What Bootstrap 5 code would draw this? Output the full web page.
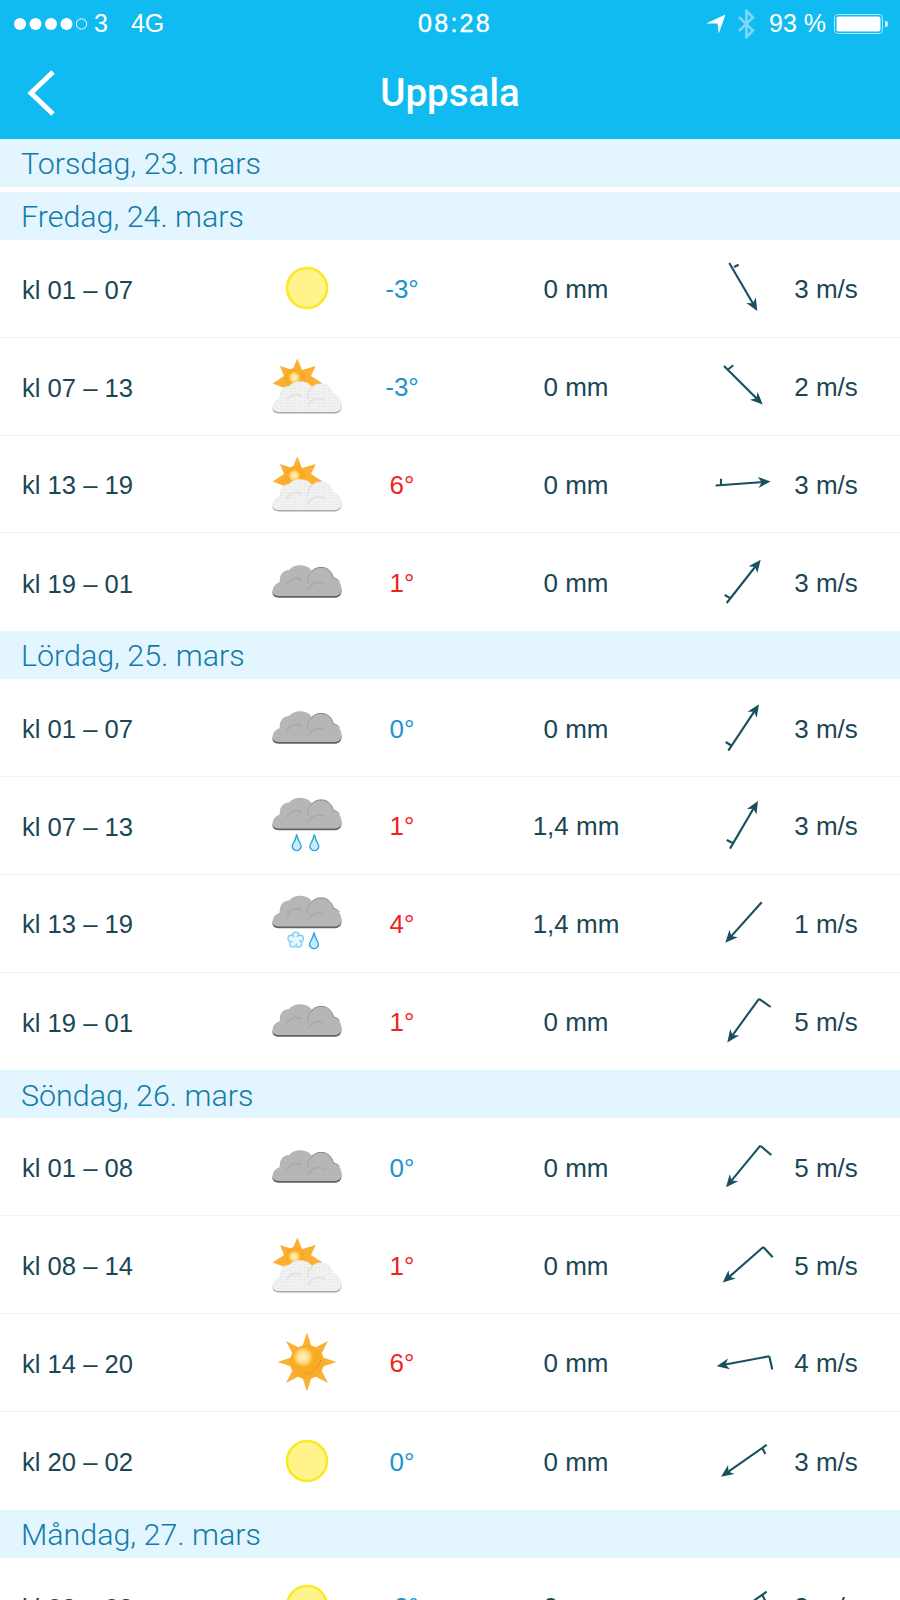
<!DOCTYPE html>
<html lang="sv">

<head>
    <meta charset="UTF-8">
    <meta name="viewport" content="width=device-width, initial-scale=1.0">
    <title>Uppsala</title>
    <link href="https://cdn.jsdelivr.net/npm/bootstrap@5.3.0/dist/css/bootstrap.min.css" rel="stylesheet">
    <style>
        body {
            font-family: "Liberation Sans", Arial, sans-serif;
            color: #1b4655;
            background: #fff;
            height: 100vh;
            overflow: hidden;
        }

        .sprites {
            position: absolute;
            width: 0;
            height: 0;
        }

        .top-bar {
            background: #0fbbf0;
            height: 139px;
            color: #fff;
        }

        .status-bar {
            height: 46px;
            padding: 2px 12px 0 14px;
            font-size: 25px;
        }

        .status-side {
            flex: 1 1 0;
        }

        .status-time {
            letter-spacing: 2.3px;
            margin-left: 8px;
            -webkit-text-stroke: 0.4px #fff;
        }

        .status-net {
            margin-left: 23px;
        }

        .status-bt {
            margin-left: 11px;
        }

        .status-pct {
            margin-left: 13px;
            margin-right: 8px;
        }

        .title-bar {
            height: 93px;
        }

        .title-side {
            width: 80px;
            padding-left: 25px;
        }

        .title-text {
            font-size: 38.5px;
            font-weight: 500;
            font-family: Roboto, "Liberation Sans", sans-serif;
            line-height: 1;
            padding-top: 2px;
        }

        .day-head {
            height: 48px;
            background: #e3f5fe;
            color: #127ba8;
            font-family: Roboto, "Liberation Sans", sans-serif;
            font-weight: 300;
            font-size: 30.4px;
            padding: 2px 0 0 21px;
        }

        .day-gap {
            margin-bottom: 5px;
        }

        .hour-row {
            height: 97.8px;
            font-size: 26px;
            padding-left: 22px;
            border-bottom: 1px solid #e7f4fa;
        }

        .hour-row.last-row {
            border-bottom: 0;
        }

        .c-time { width: 240px; padding-top: 3px; font-size: 25.6px; }
        .c-icon { width: 90px; height: 98px; }
        .c-temp { width: 100px; padding-top: 3px; text-align: center; }
        .c-rain { width: 248px; padding-top: 3px; text-align: center; }
        .c-dir { width: 90px; height: 98px; }
        .c-wind { width: 72px; padding-top: 3px; text-align: center; }

        .t-cold { color: #1e93cd; }
        .t-warm { color: #f0231f; }
    </style>
</head>

<body>
    <svg class="sprites" aria-hidden="true">
        <defs>
            <pattern id="dots" width="3" height="3" patternUnits="userSpaceOnUse">
                <rect x="0" y="0" width="1" height="1" fill="#e2e2e2" />
            </pattern>
            <radialGradient id="glow" cx="0.5" cy="0.5" r="0.5">
                <stop offset="0" stop-color="#fff4c4" />
                <stop offset="0.55" stop-color="#fde08a" />
                <stop offset="1" stop-color="#fab12f" />
            </radialGradient>
            <path id="cloud-shape" d="M17 75C11 75 10 71 10.7 69C11.5 64 15 62 18 61C17 54 21 49 27 49C30 45 36 43.5 41 44.5C45 45 48 47 50 50C53 47 57 46 61 46.5C66 47 70 51 71.5 57C76 57.5 79.5 63 79.5 68C79.5 73 76 75 73 75Z" />
        </defs>
        <symbol id="i-sun" viewBox="0 0 90 98">
            <circle cx="45" cy="49" r="20" fill="#fff48c" stroke="#fbe91f" stroke-width="2.5" />
        </symbol>
        <symbol id="i-star" viewBox="0 0 90 98">
            <polygon points="45,19.5 50.4,36.1 66,28 57.9,43.6 74.5,49 57.9,54.4 66,70 50.4,61.9 45,78.5 39.6,61.9 24,70 32.1,54.4 15.5,49 32.1,43.6 24,28 39.6,36.1" fill="#fbb034" />
            <circle cx="45" cy="49" r="17" fill="#f9ab26" />
            <circle cx="41" cy="44" r="10" fill="url(#glow)" />
            <path d="M43 60.5Q55 60 59 46" fill="none" stroke="#ee4a2a" stroke-width="1" stroke-dasharray="1 2.5" />
        </symbol>
        <symbol id="i-partly" viewBox="0 0 90 98">
            <polygon points="35.3,21.6 40,33 53.7,29 49,39 60.7,46.5 45,52 25,52 10.7,46.5 22,39 18,29 30.5,33" fill="#fbb034" />
            <circle cx="33" cy="41" r="10" fill="#f9ab26" />
            <circle cx="32.3" cy="40.6" r="6" fill="url(#glow)" />
            <use href="#cloud-shape" y="1.4" fill="#a4a9a9" />
            <use href="#cloud-shape" fill="#f1f1f1" />
            <use href="#cloud-shape" fill="url(#dots)" />
            <path d="M25 64C28 57 34 56 40 59M46 69C50 61 56 60 63 63M50 50C46 54 45 58 46 62" fill="none" stroke="#e3e3e3" stroke-width="2" />
        </symbol>
        <g id="grey-cloud">
            <use href="#cloud-shape" y="1.8" fill="#55656a" />
            <use href="#cloud-shape" fill="#b6b6b6" />
            <path d="M50 50C53 47 57 46 61 46.5C66 47 70 51 71.5 57C74 57.3 76 58.5 77.5 60.5" fill="none" stroke="#7f8b8c" stroke-width="1" />
            <path d="M25 64C28 57 34 56 40 59M46 69C50 61 56 60 63 63M50 50C46 54 45 58 46 62" fill="none" stroke="#a5abaa" stroke-width="1.6" />
        </g>
        <symbol id="i-cloud" viewBox="0 0 90 98">
            <use href="#grey-cloud" y="-12" />
        </symbol>
        <path id="drop" d="M0 0Q1 5 3.7 9.5A4.3 4.3 0 1 1 -3.7 9.5Q-1 5 0 0Z" fill="#cdecf9" stroke="#22a5e0" stroke-width="1.3" />
        <symbol id="i-rain" viewBox="0 0 90 98">
            <use href="#grey-cloud" y="-22.5" />
            <use href="#drop" x="34.7" y="58.5" />
            <use href="#drop" x="52.3" y="58.5" />
        </symbol>
        <symbol id="i-sleet" viewBox="0 0 90 98">
            <use href="#grey-cloud" y="-22.5" />
            <g transform="translate(33.7 66)" fill="#e6f6fd" stroke="#7ed0f2" stroke-width="1.4">
                <circle cx="0" cy="-4.6" r="3.3" />
                <circle cx="4.4" cy="-1.4" r="3.3" />
                <circle cx="2.7" cy="3.7" r="3.3" />
                <circle cx="-2.7" cy="3.7" r="3.3" />
                <circle cx="-4.4" cy="-1.4" r="3.3" />
                <circle cx="0" cy="0" r="3.6" stroke="none" />
            </g>
            <use href="#drop" x="52" y="58.5" />
        </symbol>
    </svg>

    <header class="top-bar">
        <div class="status-bar d-flex align-items-center">
            <div class="status-side d-flex align-items-center">
                <svg width="76" height="14" viewBox="0 0 76 14">
                    <circle cx="6" cy="7" r="6" fill="#fff" />
                    <circle cx="21.5" cy="7" r="6" fill="#fff" />
                    <circle cx="37" cy="7" r="6" fill="#fff" />
                    <circle cx="52.5" cy="7" r="6" fill="#fff" />
                    <circle cx="67.5" cy="7" r="5.2" fill="none" stroke="#fff" stroke-width="1" />
                </svg>
                <span class="ms-1">3</span>
                <span class="status-net">4G</span>
            </div>
            <div class="status-time">08:28</div>
            <div class="status-side d-flex align-items-center justify-content-end">
                <svg width="20" height="20" viewBox="0 0 20 20">
                    <path d="M0 9.5L19.5 0.5L12.8 19.5L11.5 9.5Z" fill="#fff" />
                </svg>
                <svg class="status-bt" width="19" height="30" viewBox="0 0 19 30" fill="none" stroke="#7fd6f6" stroke-width="2.6">
                    <path d="M2 8L16 21.5L9.5 28V2L16 8.5L2 22" />
                </svg>
                <span class="status-pct">93 %</span>
                <svg width="54" height="20" viewBox="0 0 54 20">
                    <rect x="0.5" y="0.5" width="48" height="19" rx="3.5" fill="none" stroke="#a8e6fa" />
                    <rect x="2.5" y="2.5" width="44" height="15" rx="2" fill="#fff" />
                    <path d="M51 7h1a2 2 0 0 1 2 2v2a2 2 0 0 1-2 2h-1Z" fill="#c9effb" />
                </svg>
            </div>
        </div>
        <nav class="title-bar d-flex align-items-center">
            <div class="title-side">
                <svg class="d-block" width="32" height="48" viewBox="0 0 32 48" fill="none" stroke="#fff" stroke-width="5">
                    <path d="M28 3L6 24L28 45" />
                </svg>
            </div>
            <div class="title-text flex-grow-1 text-center">Uppsala</div>
            <div class="title-side"></div>
        </nav>
    </header>

    <main id="forecast"></main>

    <script>
        // tail, head, tick start, tick end - measured per row, in the 90x98 box of the arrow
        const days = [
            { title: 'Torsdag, 23. mars', rows: [] },
            {
                title: 'Fredag, 24. mars', rows: [
                    ['kl 01 – 07', 'sun', '-3°', '0 mm', [29.3, 24, 57.3, 72, 34, 28, 38.7, 25.7], '3 m/s'],
                    ['kl 07 – 13', 'partly', '-3°', '0 mm', [24, 29, 62.7, 67.6, 28.3, 32.3, 33.3, 28.3], '2 m/s'],
                    ['kl 13 – 19', 'partly', '6°', '0 mm', [15.7, 50.5, 70.7, 46.5, 21, 49.8, 21, 43.8], '3 m/s'],
                    ['kl 19 – 01', 'cloud', '1°', '0 mm', [26.7, 70, 60.7, 26.8, 30.7, 65.4, 24.7, 62], '3 m/s']
                ]
            },
            {
                title: 'Lördag, 25. mars', rows: [
                    ['kl 01 – 07', 'cloud', '0°', '0 mm', [28.3, 71.7, 59, 25.3, 32, 67, 25.7, 63], '3 m/s'],
                    ['kl 07 – 13', 'rain', '1°', '1,4 mm', [30, 72.6, 58, 24.9, 33.3, 67.3, 26.7, 64], '3 m/s'],
                    ['kl 13 – 19', 'sleet', '4°', '1,4 mm', [61.7, 28.2, 25.3, 68.8], '1 m/s'],
                    ['kl 19 – 01', 'cloud', '1°', '0 mm', [59, 26.8, 27.3, 70.4, 59, 26.8, 70.7, 35], '5 m/s']
                ]
            },
            {
                title: 'Söndag, 26. mars', rows: [
                    ['kl 01 – 08', 'cloud', '0°', '0 mm', [60.3, 27.7, 26, 69.3, 60.3, 27.7, 71.3, 37], '5 m/s'],
                    ['kl 08 – 14', 'partly', '1°', '0 mm', [63.3, 31, 22.7, 66.6, 63.3, 31, 72.7, 41.3], '5 m/s'],
                    ['kl 14 – 20', 'star', '6°', '0 mm', [69.3, 43.2, 16.7, 53.2, 69.3, 43.2, 72.3, 56.5], '4 m/s'],
                    ['kl 20 – 02', 'sun', '0°', '0 mm', [66.7, 32.8, 21, 64.8, 62.3, 36, 65.3, 42], '3 m/s']
                ]
            },
            {
                title: 'Måndag, 27. mars', rows: [
                    ['kl 02 – 08', 'sun', '-2°', '0 mm', [66.7, 34.7, 21, 66.7, 62.3, 38, 65.3, 44], '3 m/s']
                ]
            }
        ];

        function windArrow(p) {
            const [x1, y1, x2, y2, tx1, ty1, tx2, ty2] = p;
            const len = Math.hypot(x2 - x1, y2 - y1);
            const ux = (x2 - x1) / len, uy = (y2 - y1) / len;
            const at = (back, side) => `${(x2 - ux * back - uy * side).toFixed(1)},${(y2 - uy * back + ux * side).toFixed(1)}`;
            const tick = tx1 === undefined ? '' : `<path d="M${tx1} ${ty1}L${tx2} ${ty2}" />`;
            return `<svg class="c-dir flex-shrink-0" viewBox="0 0 90 98" fill="none" stroke="#17505e" stroke-width="2.1">
                <path d="M${x1} ${y1}L${x2 - ux * 6} ${y2 - uy * 6}" />${tick}
                <polygon points="${x2},${y2} ${at(12.5, 5.5)} ${at(9, 0)} ${at(12.5, -5.5)}" fill="#17505e" stroke="none" />
            </svg>`;
        }

        const forecast = document.getElementById('forecast');
        days.forEach((day) => {
            const gap = day.rows.length === 0 ? ' day-gap' : '';
            let html = `<div class="day-head d-flex align-items-center${gap}">${day.title}</div>`;
            day.rows.forEach((r, i) => {
                const cold = r[2].startsWith('-') || r[2] === '0°';
                const last = i === day.rows.length - 1 ? ' last-row' : '';
                html += `<div class="hour-row d-flex align-items-center${last}">
                    <div class="c-time">${r[0]}</div>
                    <svg class="c-icon flex-shrink-0"><use href="#i-${r[1]}" /></svg>
                    <div class="c-temp ${cold ? 't-cold' : 't-warm'}">${r[2]}</div>
                    <div class="c-rain">${r[3]}</div>
                    ${windArrow(r[4])}
                    <div class="c-wind">${r[5]}</div>
                </div>`;
            });
            forecast.insertAdjacentHTML('beforeend', html);
        });
    </script>
    <script src="https://cdn.jsdelivr.net/npm/bootstrap@5.3.0/dist/js/bootstrap.bundle.min.js"></script>
</body>

</html>
